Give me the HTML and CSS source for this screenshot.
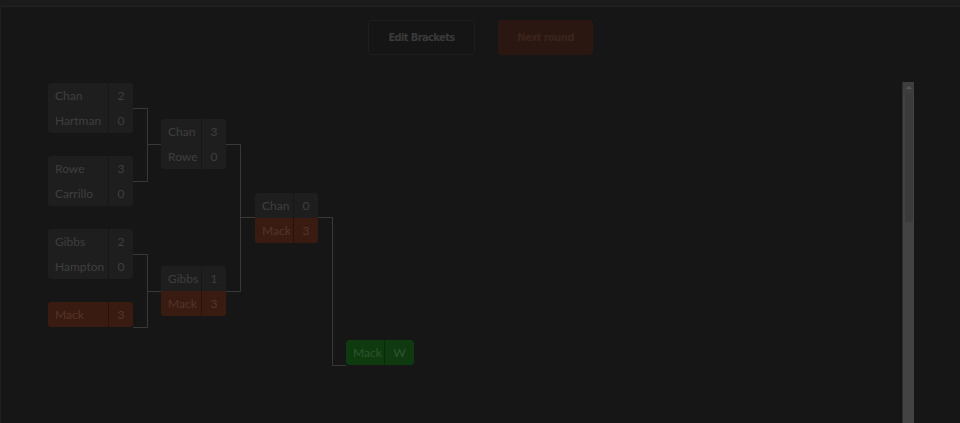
FILE: index.html
```html
<!DOCTYPE html>
<html lang="en">
<head>
<meta charset="utf-8">
<title>Bracket</title>
<link rel="stylesheet" href="styles.css">
</head>
<body>
<div class="topbar"></div>
<div class="page">
  <div class="actions">
    <button class="btn btn-edit">Edit Brackets</button>
    <button class="btn btn-next">Next round</button>
  </div>
  <div class="stage">
    <div class="bracket">
      <div class="round r1">
        <div class="match">
          <div class="team"><span class="name">Chan</span><span class="score">2</span></div>
          <div class="team"><span class="name">Hartman</span><span class="score">0</span></div>
        </div>
        <div class="match">
          <div class="team"><span class="name">Rowe</span><span class="score">3</span></div>
          <div class="team"><span class="name">Carrillo</span><span class="score">0</span></div>
        </div>
        <div class="match">
          <div class="team"><span class="name">Gibbs</span><span class="score">2</span></div>
          <div class="team"><span class="name">Hampton</span><span class="score">0</span></div>
        </div>
        <div class="match bye">
          <div class="team win"><span class="name">Mack</span><span class="score">3</span></div>
          <div class="team ghost"></div>
        </div>
      </div>
      <svg class="conn c1" width="28" height="293" viewBox="0 0 28 293">
        <path d="M0 37.5H14.5V110.5H0M14.5 73.5H28M0 183.5H14.5V256.5H0M14.5 220.5H28"/>
      </svg>
      <div class="round r2">
        <div class="match">
          <div class="team"><span class="name">Chan</span><span class="score">3</span></div>
          <div class="team"><span class="name">Rowe</span><span class="score">0</span></div>
        </div>
        <div class="match">
          <div class="team"><span class="name">Gibbs</span><span class="score">1</span></div>
          <div class="team win"><span class="name">Mack</span><span class="score">3</span></div>
        </div>
      </div>
      <svg class="conn c2" width="29" height="293" viewBox="0 0 29 293">
        <path d="M0 73.5H14.5V220.5H0M14.5 146.5H29"/>
      </svg>
      <div class="round r3">
        <div class="match">
          <div class="team"><span class="name">Chan</span><span class="score">0</span></div>
          <div class="team win"><span class="name">Mack</span><span class="score">3</span></div>
        </div>
      </div>
      <svg class="conn c3" width="28" height="300" viewBox="0 0 28 300">
        <path d="M0 146.5H14.5V294.5H28"/>
      </svg>
      <div class="round final">
        <div class="match">
          <div class="team champ"><span class="name">Mack</span><span class="score">W</span></div>
        </div>
      </div>
    </div>
    <div class="scrollbar">
      <div class="sb-up"><span class="arrow"></span></div>
      <div class="sb-thumb"></div>
    </div>
  </div>
</div>
</body>
</html>
```

FILE: styles.css
```css
html, body {
  margin: 0;
  padding: 0;
  height: 423px;
  overflow: hidden;
  background: #161616;
  font-family: Lato, "Open Sans", sans-serif;
}

.topbar {
  height: 6px;
  background: #1b1b1b;
  border-bottom: 1px solid #222222;
}

.page {
  border-left: 1px solid #202020;
  height: 416px;
  box-sizing: border-box;
}

.actions {
  display: flex;
  justify-content: center;
  gap: 23px;
  padding-top: 13px;
}

.btn {
  height: 35px;
  border-radius: 3px;
  font-family: "DejaVu Sans Condensed", "Liberation Sans", Arial, sans-serif;
  font-stretch: condensed;
  font-weight: bold;
  font-size: 11px;
  letter-spacing: -0.6px;
  padding: 0 0 1px;
  cursor: pointer;
}

.btn-edit {
  width: 107px;
  background: #151515;
  border: 1px solid #1e1e1e;
  color: #3a3a3a;
}

.btn-next {
  width: 95px;
  background: #2a1711;
  border: 1px solid #2a1711;
  color: #3b241c;
}

.stage {
  display: flex;
  margin-top: 16px;
  height: 352px;
}

.bracket {
  flex: 1;
  display: flex;
  align-items: flex-start;
  padding-left: 47px;
}

.round {
  height: 293px;
  display: flex;
  flex-direction: column;
  justify-content: space-around;
}

.final {
  justify-content: flex-start;
  padding-top: 269px;
  height: auto;
}

.conn {
  display: block;
  flex: none;
}

.conn path {
  fill: none;
  stroke: #383838;
  stroke-width: 1;
}

.match {
  display: flex;
  flex-direction: column;
  border-radius: 3px;
  overflow: hidden;
}

.team {
  display: flex;
  height: 25px;
  line-height: 25px;
  font-size: 12px;
  background: #1e1e1e;
  color: #3e3e3e;
}

.team.ghost {
  background: transparent;
}

.bye {
  overflow: visible;
}

.bye .team.win {
  border-radius: 3px;
}

.team.win {
  background: #3a1b11;
  color: #553529;
}

.team.champ {
  background: #0f3a10;
  color: #2e542f;
  border-radius: 3px;
}

.name {
  box-sizing: border-box;
  padding-left: 7px;
  white-space: nowrap;
}

.score {
  text-align: center;
  border-left: 1px solid #171717;
}

.win .score {
  border-left-color: #2a120a;
}

.champ .score {
  border-left-color: #0a2a0a;
}

.r1 .name { width: 60px; }
.r1 .score { width: 24px; }
.r2 .name { width: 40px; }
.r2 .score { width: 24px; }
.r3 .name { width: 38px; }
.r3 .score { width: 24px; }
.final .name { width: 38px; }
.final .score { width: 29px; }

.scrollbar {
  width: 11px;
  margin-top: 11px;
  margin-right: 46px;
  background: #434343;
  border-left: 1px solid #2e2e2e;
  display: flex;
  flex-direction: column;
  align-items: center;
}

.sb-up {
  width: 100%;
  height: 11px;
  background: #3e3e3e;
  display: flex;
  align-items: center;
  justify-content: center;
}

.arrow {
  width: 0;
  height: 0;
  border-left: 3px solid transparent;
  border-right: 3px solid transparent;
  border-bottom: 3px solid #585858;
}

.sb-thumb {
  width: 8px;
  height: 129px;
  background: #3b3b3b;
}
```
